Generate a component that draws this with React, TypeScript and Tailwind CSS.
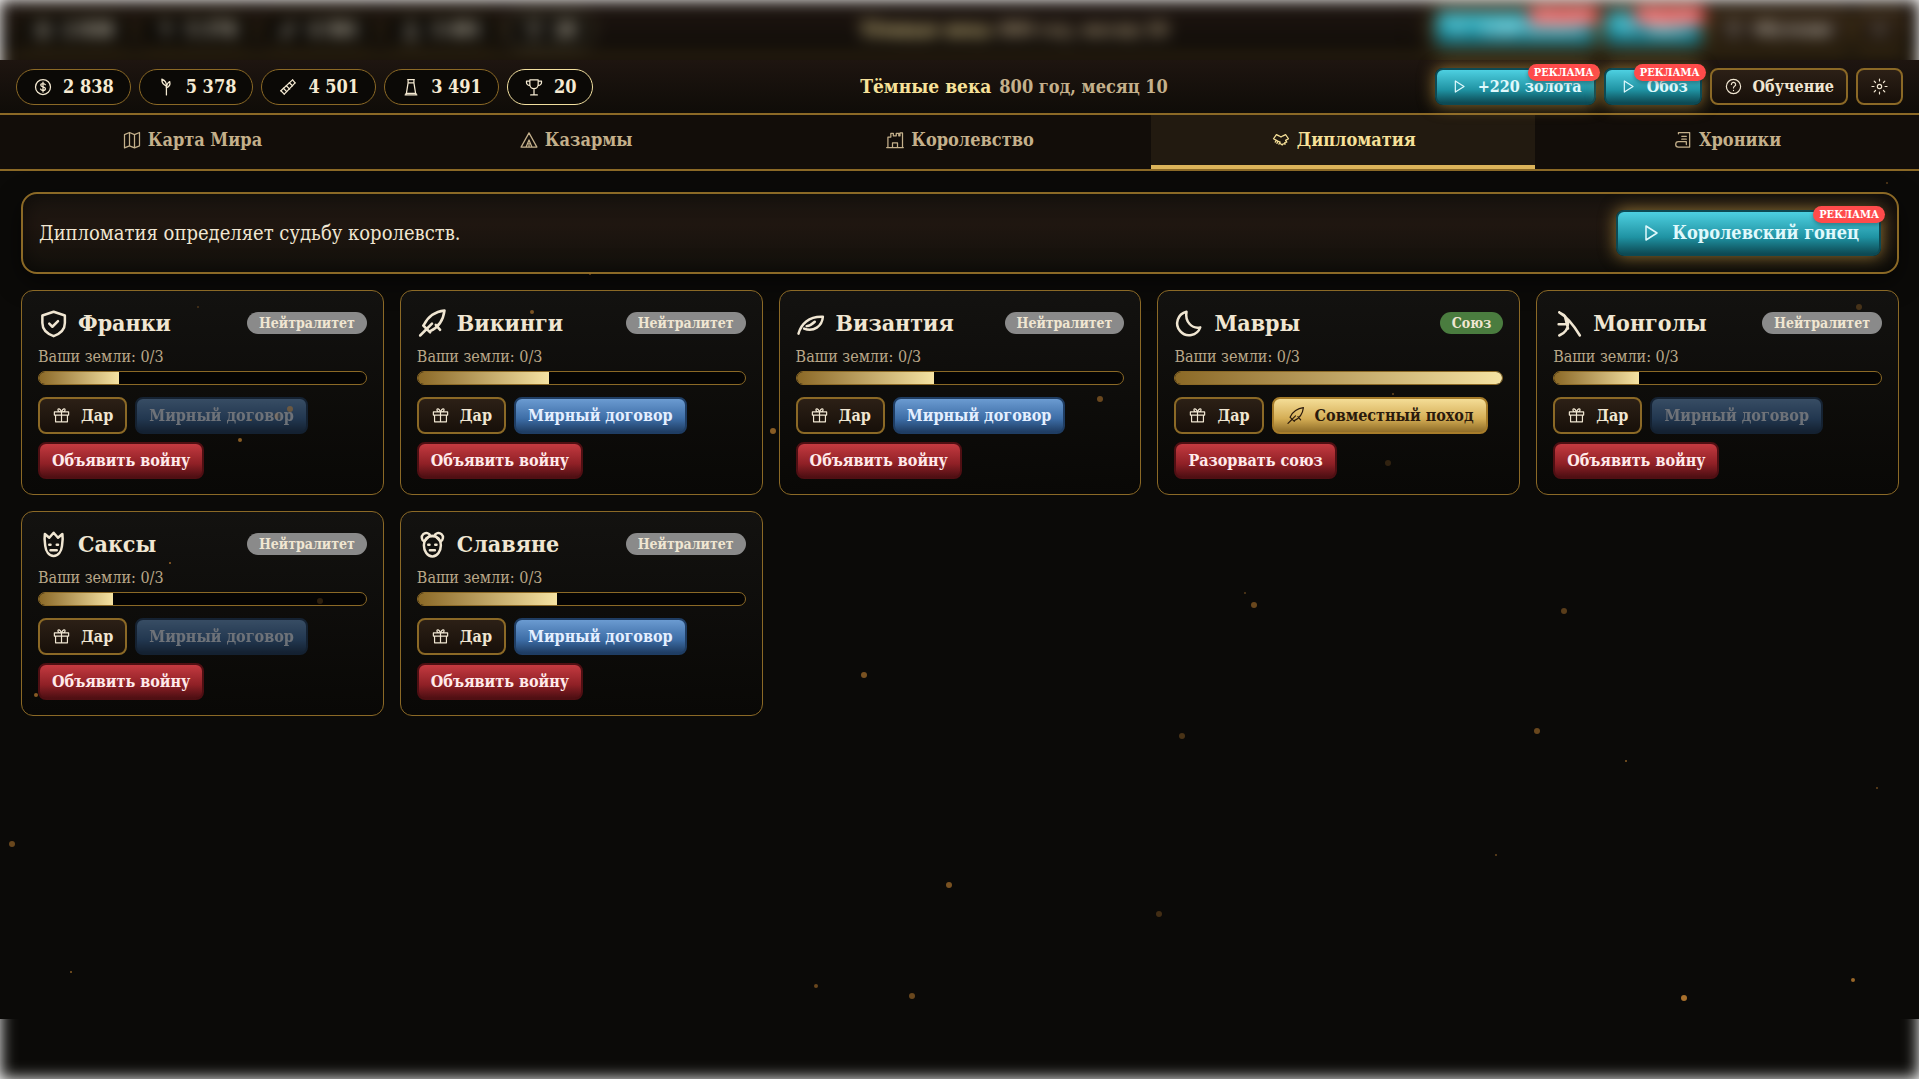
import type { ReactNode } from 'react'

type IconName =
  | 'coin'
  | 'wheat'
  | 'wood'
  | 'stone'
  | 'cup'
  | 'play'
  | 'help'
  | 'gear'
  | 'map'
  | 'tent'
  | 'castle'
  | 'hands'
  | 'scroll'
  | 'gift'
  | 'shield'
  | 'sword'
  | 'leaf'
  | 'moon'
  | 'bow'
  | 'king'
  | 'bear'

const ICONS: Record<IconName, ReactNode> = {
  coin: (
    <>
      <circle cx="12" cy="12" r="9" />
      <path d="M12 6v12M14.800 9.200c-.5-1-1.500-1.400-2.800-1.400-1.600 0-2.700.7-2.700 1.900 0 2.900 5.600 1.500 5.600 4.400 0 1.300-1.200 2.100-2.900 2.100-1.500 0-2.600-.6-3-1.700" />
    </>
  ),
  wheat: (
    <>
      <path d="M12.500 21.500V10" />
      <path d="M12.500 11C9 9.500 6.800 6.500 7 2.500c3.500 1.500 5.800 4.500 5.500 8.500z" />
      <path d="M12.500 13c0-3 1-5.500 4-7.500.8 3-.5 6-4 7.500z" />
    </>
  ),
  wood: (
    <>
      <path d="M3.500 16.500L17.500 3.500M7.500 20.500L20.500 7" />
      <path d="M3.500 16.500l4 4M17.500 3.500l3 3.500M6.500 13.500l4 4M10 10.500l4 4M13.500 7l4 3.500" />
    </>
  ),
  stone: <path d="M8 3h8M8.500 3v4h7V3M8.500 7L6.500 19.500M15.500 7l2 12.500M5 21.500h14M6 19.500h12v2H6z" />,
  cup: (
    <path d="M7 3.500h10v5.500a5 5 0 0 1-10 0zM7 5H3v1.500A3.500 3.500 0 0 0 7 10M17 5h4v1.500a3.500 3.500 0 0 1-4 3.500M12 14v7M8 21.500h8" />
  ),
  play: <path d="M8 5v14l11-7z" />,
  help: (
    <>
      <circle cx="12" cy="12" r="9" />
      <path d="M9.300 9.500a2.700 2.700 0 1 1 4 2.300c-.9.500-1.300 1-1.300 2M12 16.800v.4" />
    </>
  ),
  gear: (
    <>
      <circle cx="12" cy="12" r="2.700" />
      <path d="M12 2.500v2.500M12 19v2.500M2.500 12H5M19 12h2.500M5.300 5.300l1.700 1.700M17 17l1.700 1.700M5.300 18.700L7 17M17 7l1.700-1.700" />
    </>
  ),
  map: <path d="M3 5.500L9 3l6 2.500L21 3v16l-6 2.500L9 19l-6 2.500zM9 3v16M15 5.500v16" />,
  tent: <path d="M12 3.500L2.500 20.500h19zM12 12l-3.500 8.500M12 12l3.500 8.500M12 16v4.500" />,
  castle: <path d="M2 21h20M3.500 21V8.500H7V4h3v3h3.500V4h3v3h1.500V3.500h3V21M9 21v-5.500h6V21" />,
  hands: (
    <path d="M6.500 12.500L3 10.500l3.500-5 3 1.500L12 8.500 14.500 7l3-1.500 3.500 5-3.500 2M6.500 12.500l-1.500 2M6.500 12.500l2 1-1.500 2.500M8.500 13.500l2.500 1-1.500 2.500M17.500 12.500l1.500 2-2.500.5.500 2-2.500-.5-1 1.500-2-1.500" />
  ),
  scroll: (
    <path d="M6.500 3H20v17.500H6.500a3.200 3.200 0 0 1 0-6.500H16v3.500M6.500 3v1.500M10.500 7.500H16M10.500 11H16" />
  ),
  gift: (
    <path d="M3 7.500h18v4H3zM4.500 11.500V20h15v-8.500M12 7.500V20M12 7.500C9 7.500 7.500 6.300 7.500 4.700S10 2.500 12 7.500zM12 7.500c3 0 4.500-1.200 4.500-2.800S14 2.500 12 7.500z" />
  ),
  shield: <path d="M12.500 3l9 3v6c0 5-3.500 8.500-9 10.500-5.500-2-9-5.500-9-10.500V6zM9 12.500l2.500 2.500 4.500-4.500" />,
  sword: (
    <path d="M2.500 22l5-5M5 14l5.500 5.500M5.500 13.500C8.500 7.500 13 3 22 2c-1 8-5 13.500-11.500 16.500M15 13.500l3.500 4M8.500 16l3.500-3.500" />
  ),
  leaf: (
    <path d="M2 20.500C4 13 10 6.500 21.500 7c-.5 7.500-7.500 12.500-15 9.500M8.500 14.500c2.500-.3 4.500-1.500 6.500-3.500" />
  ),
  moon: <path d="M10 3A9.500 9.500 0 1 0 21 15.500C14.500 17 8.500 11 10 3z" />,
  bow: (
    <path d="M5 3.500c4.500 2 7 5.500 7 9 0 4-2.500 7.500-7 9.500M4.500 13H12M5 3.500C11 7 17 14.500 21.500 22M9.500 6.500l2.500 10" />
  ),
  king: (
    <>
      <path d="M5.500 4L9 7l3.500-4L16 7l3.500-3c.5 3 .3 6-.3 9.500-.5 4.500-3 8-6.700 8s-6.200-3.500-6.700-8C5.200 10 5 7 5.500 4z" />
      <path d="M9 12.500h1M15 12.500h1M10 17h5" />
    </>
  ),
  bear: (
    <>
      <path d="M5.800 10a3.600 3.600 0 1 1 5-4.500h3a3.600 3.600 0 1 1 5 4.500" />
      <path d="M12.300 5.500c4 0 6.800 3 6.800 7.500s-2.800 9-6.800 9-6.800-4.500-6.800-9 2.800-7.500 6.800-7.500z" />
      <path d="M5.800 10l4-4.200M18.800 10l-4-4.200M9 12.500h1M14.600 12.500h1M10.300 17h4" />
    </>
  ),
}

function Icon({ name, className }: { name: IconName; className: string }) {
  return (
    <svg
      viewBox="0 0 24 24"
      fill="none"
      stroke="currentColor"
      strokeWidth="1.5"
      strokeLinecap="round"
      strokeLinejoin="round"
      aria-hidden="true"
      className={`shrink-0 ${className}`}
    >
      {ICONS[name]}
    </svg>
  )
}

const RESOURCES: { icon: IconName; value: string }[] = [
  { icon: 'coin', value: '2 838' },
  { icon: 'wheat', value: '5 378' },
  { icon: 'wood', value: '4 501' },
  { icon: 'stone', value: '3 491' },
  { icon: 'cup', value: '20' },
]

const TABS: { icon: IconName; label: string }[] = [
  { icon: 'map', label: 'Карта Мира' },
  { icon: 'tent', label: 'Казармы' },
  { icon: 'castle', label: 'Королевство' },
  { icon: 'hands', label: 'Дипломатия' },
  { icon: 'scroll', label: 'Хроники' },
]

type Faction = {
  name: string
  icon: IconName
  relation: number
  ally?: boolean
  canTreaty?: boolean
}

const FACTIONS: Faction[] = [
  { name: 'Франки', icon: 'shield', relation: 24.5 },
  { name: 'Викинги', icon: 'sword', relation: 40, canTreaty: true },
  { name: 'Византия', icon: 'leaf', relation: 42, canTreaty: true },
  { name: 'Мавры', icon: 'moon', relation: 100, ally: true },
  { name: 'Монголы', icon: 'bow', relation: 26 },
  { name: 'Саксы', icon: 'king', relation: 22.5 },
  { name: 'Славяне', icon: 'bear', relation: 42.5, canTreaty: true },
]

// x, y, radius, opacity
const EMBERS = [
  [198, 307, 1, 0.4],
  [290, 409, 3, 0.5],
  [277, 416, 3, 0.2],
  [251, 420, 1, 0.7],
  [240, 440, 2, 0.8],
  [532, 312, 2, 0.7],
  [590, 274, 1, 0.6],
  [773, 431, 3, 0.8],
  [1100, 399, 3, 0.6],
  [1393, 394, 1, 0.6],
  [1388, 463, 3, 0.25],
  [1887, 183, 1, 0.5],
  [1859, 307, 3, 0.35],
  [170, 563, 1, 0.9],
  [320, 601, 3, 0.25],
  [36, 695, 2, 0.8],
  [1245, 593, 1, 0.5],
  [1254, 605, 3, 0.6],
  [1564, 611, 3, 0.5],
  [864, 675, 3, 0.7],
  [1182, 736, 3, 0.4],
  [1537, 731, 3, 0.6],
  [1626, 761, 1, 0.8],
  [1877, 788, 1, 0.6],
  [1496, 855, 1, 0.6],
  [12, 844, 3, 0.6],
  [949, 885, 3, 0.7],
  [1159, 914, 3, 0.35],
  [71, 972, 1, 0.8],
  [816, 986, 2, 0.6],
  [912, 996, 3, 0.6],
  [1684, 998, 3, 1],
  [1853, 980, 2, 0.9],
]

const VARIANTS = {
  dark: 'border-[#8b6926] bg-linear-to-b from-[#2c2016] to-[#170f09] text-[#f0e6d2]',
  blue: 'border-[#1f3d63] bg-linear-to-b from-[#6b9bd1] via-[#3d6da6] via-60% to-[#1f3d63] text-[#e4efff]',
  red: 'border-[#4f0f13] bg-linear-to-b from-[#c43a40] via-[#8f2026] via-60% to-[#4f0f13] text-[#ffeaea]',
  gold: 'border-[#a67c2a] bg-linear-to-b from-[#f4dd96] via-[#d4ad54] via-60% to-[#8f6d28] text-[#2a1a0c]',
  cyan: 'border-[#0d4a54] bg-linear-to-b from-[#4dd0e1] via-[#1f93a3] via-60% to-[#0d4a54] text-[#e0f9fc] shadow-[0_0_16px_1px_rgba(212,168,74,0.6)]',
}

type ButtonProps = {
  variant: keyof typeof VARIANTS
  icon?: IconName
  ad?: boolean
  large?: boolean
  disabled?: boolean
  label?: string
  children?: ReactNode
}

function Button({ variant, icon, ad, large, disabled, label, children }: ButtonProps) {
  return (
    <button
      type="button"
      disabled={disabled}
      aria-label={label}
      className={`relative inline-flex items-center gap-2.5 border-2 rounded-lg font-bold whitespace-nowrap cursor-pointer disabled:opacity-45 disabled:cursor-default ${
        large ? 'h-[46px] px-5 text-lg' : 'h-[37px] px-3 text-base'
      } ${VARIANTS[variant]}`}
    >
      {icon && <Icon name={icon} className={large ? 'size-6' : 'size-[19px]'} />}
      {children}
      {ad && (
        <span className="absolute -top-1.5 -right-1.5 h-[17px] px-1.5 rounded-full bg-[#ff4b4b] text-white text-[11px] leading-[17px] shadow-[0_2px_4px_rgba(0,0,0,0.3)]">
          РЕКЛАМА
        </span>
      )}
    </button>
  )
}

function Header() {
  return (
    <header className="flex items-center justify-between h-[55px] px-4 border-b-2 border-[#8b6926] bg-linear-to-b from-[#1e1510] to-[#0f0c08]">
      <div className="flex gap-2">
        {RESOURCES.map((r) => (
          <div
            key={r.icon}
            className={`flex items-center gap-2.5 h-9 px-4 border rounded-full bg-[#0b0906] text-[#f5ead2] font-bold text-lg ${
              r.icon === 'cup' ? 'border-[#f2df9f]' : 'border-[#8b6926]'
            }`}
          >
            <Icon name={r.icon} className="size-5" />
            {r.value}
          </div>
        ))}
      </div>
      <div className="flex items-center gap-2 font-bold">
        <span className="text-[#f7e199] text-[19px]">Тёмные века</span>
        <span className="text-[#c4b08b] text-lg">800 год, месяц 10</span>
      </div>
      <div className="flex gap-2">
        <Button variant="cyan" icon="play" ad>
          +220 золота
        </Button>
        <Button variant="cyan" icon="play" ad>
          Обоз
        </Button>
        <Button variant="dark" icon="help">
          Обучение
        </Button>
        <Button variant="dark" icon="gear" label="Настройки" />
      </div>
    </header>
  )
}

function FactionCard({ faction }: { faction: Faction }) {
  return (
    <article className="px-4 pt-4 pb-[15px] border border-[#8b6926] rounded-xl bg-linear-to-b from-[#131210] to-[#090806]">
      <div className="flex items-center justify-between">
        <h2 className="flex items-center gap-2.5 text-[#f0e6d2] text-[23px] leading-8 font-bold">
          <Icon name={faction.icon} className="size-[30px] stroke-2" />
          {faction.name}
        </h2>
        <span
          className={`h-[22px] px-3 rounded-full text-[#f0e6d2] text-sm leading-[22px] font-bold ${
            faction.ally ? 'bg-[#4a7c3f]' : 'bg-[#8a8a8a]'
          }`}
        >
          {faction.ally ? 'Союз' : 'Нейтралитет'}
        </span>
      </div>
      <p className="mt-1.5 text-[#b9a788] text-base leading-6">Ваши земли: 0/3</p>
      <div className="mt-0.5 h-3.5 border border-[#8b6926] rounded-full overflow-hidden bg-[#050403]">
        <div
          className="h-full bg-linear-to-r from-[#8b6926] to-[#f5e3a3]"
          style={{ width: `${faction.relation}%` }}
        />
      </div>
      <div className="flex flex-wrap gap-2 mt-3">
        <Button variant="dark" icon="gift">
          Дар
        </Button>
        {faction.ally ? (
          <Button variant="gold" icon="sword">
            Совместный поход
          </Button>
        ) : (
          <Button variant="blue" disabled={!faction.canTreaty}>
            Мирный договор
          </Button>
        )}
        <Button variant="red">{faction.ally ? 'Разорвать союз' : 'Объявить войну'}</Button>
      </div>
    </article>
  )
}

export default function App() {
  return (
    <div className="relative flex flex-col min-h-screen overflow-hidden bg-[#0b0a08] font-['DejaVu_Serif_Condensed','DejaVu_Serif',serif]">
      <div inert aria-hidden="true" className="h-[60px] overflow-hidden bg-white">
        <div className="pt-[3px] bg-[#1e1510] blur-[8px]">
          <Header />
          <div className="h-12 bg-[#120d09]" />
        </div>
      </div>

      <Header />

      <nav className="grid grid-cols-5 border-b-2 border-[#8b6926] bg-[#120d09]">
        {TABS.map((t) => (
          <button
            key={t.label}
            type="button"
            className={`flex items-center justify-center gap-1.5 h-[54px] border-b-4 font-bold text-lg cursor-pointer ${
              t.label === 'Дипломатия'
                ? 'border-[#dcb45a] bg-[#221a10] text-[#f7e199]'
                : 'border-transparent text-[#c4b08b]'
            }`}
          >
            <Icon name={t.icon} className="size-5" />
            {t.label}
          </button>
        ))}
      </nav>

      <main className="flex-1 flex flex-col gap-4 pl-[21px] pr-5 pt-[21px]">
        <section className="flex items-center justify-between p-4 border-2 border-[#8b6926] rounded-2xl bg-linear-to-b from-[#1a1510] via-[#1f1610] via-40% to-[#12100b] shadow-[inset_0_0_20px_rgba(0,0,0,0.5),0_8px_24px_rgba(0,0,0,0.5)]">
          <p className="text-[#f0e6d2] text-xl">Дипломатия определяет судьбу королевств.</p>
          <Button variant="cyan" icon="play" ad large>
            Королевский гонец
          </Button>
        </section>
        <div className="grid grid-cols-5 gap-4">
          {FACTIONS.map((f) => (
            <FactionCard key={f.name} faction={f} />
          ))}
        </div>
      </main>

      <div aria-hidden="true" className="h-[60px] overflow-hidden bg-white">
        <div className="h-full blur-[8px]">
          <div className="h-full bg-[#0b0a08] shadow-[0_-30px_0_#0b0a08]" />
        </div>
      </div>

      <svg className="absolute inset-0 w-full h-full pointer-events-none" aria-hidden="true">
        {EMBERS.map(([x, y, r, o]) => (
          <circle key={`${x}-${y}`} cx={x} cy={y} r={r} fill="#a8702c" opacity={o} />
        ))}
      </svg>
    </div>
  )
}
